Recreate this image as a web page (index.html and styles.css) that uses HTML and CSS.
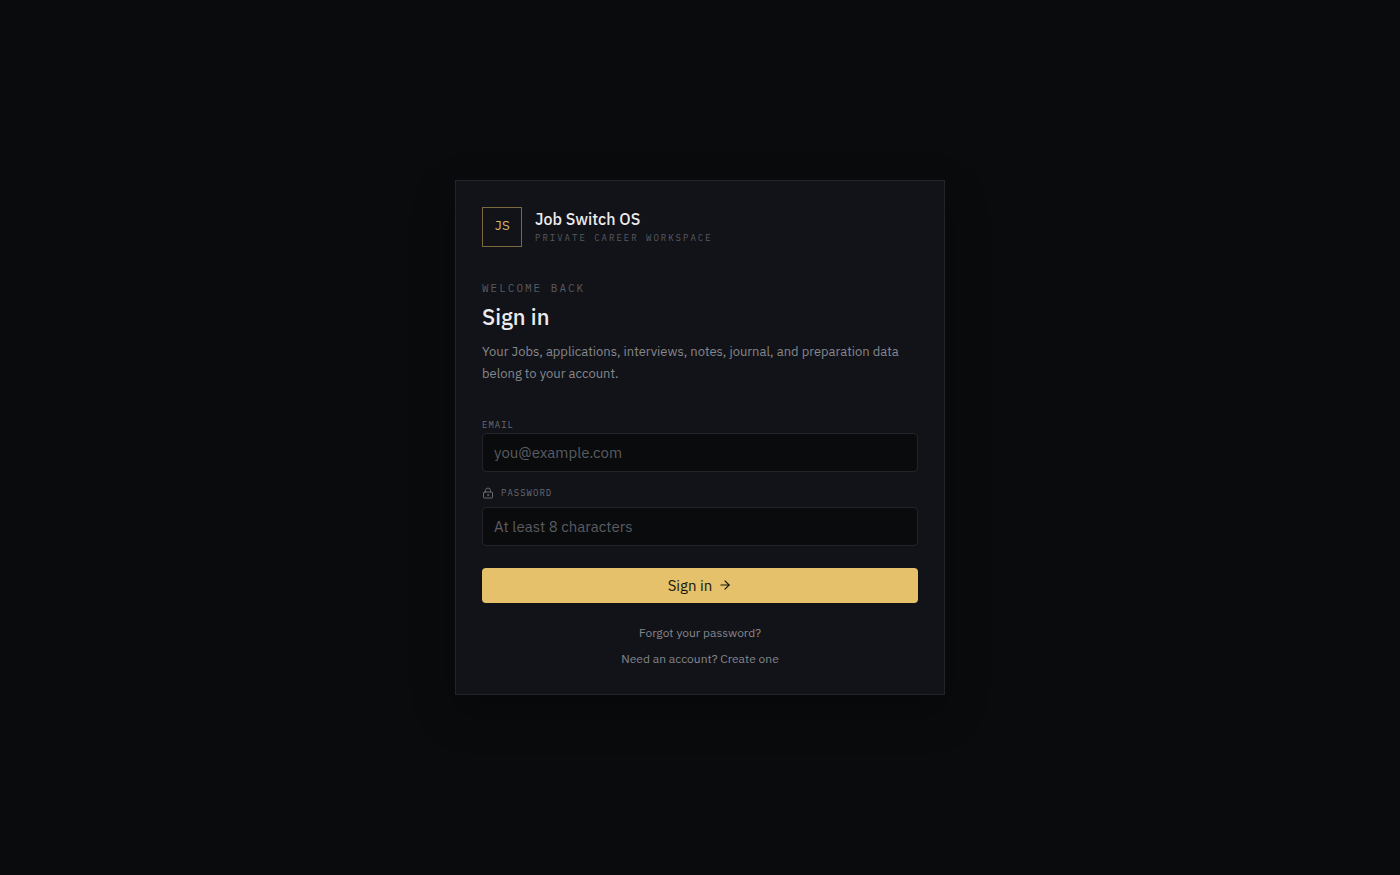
FILE: index.html
```html
<!DOCTYPE html>
<html lang="en">
<head>
<meta charset="utf-8">
<meta name="viewport" content="width=device-width, initial-scale=1">
<title>Sign in · Job Switch OS</title>
<link rel="stylesheet" href="styles.css">
</head>
<body class="page">
<main class="card">
  <header class="brand">
    <div class="brand-mark">JS</div>
    <div class="brand-text">
      <div class="brand-name">Job Switch OS</div>
      <div class="brand-tag">PRIVATE CAREER WORKSPACE</div>
    </div>
  </header>
  <section class="intro">
    <div class="eyebrow">WELCOME BACK</div>
    <h1 class="title">Sign in</h1>
    <p class="lead">Your Jobs, applications, interviews, notes, journal, and preparation data belong to your account.</p>
  </section>
  <form class="form">
    <div class="field">
      <label class="label" for="email">EMAIL</label>
      <input class="input" id="email" type="email" placeholder="you@example.com">
    </div>
    <div class="field field-password">
      <label class="label" for="password">
        <svg class="icon" width="12" height="12" viewBox="0 0 24 24" fill="none" stroke="currentColor" stroke-width="2" stroke-linecap="round" stroke-linejoin="round" aria-hidden="true"><circle cx="12" cy="16" r="1"/><rect x="3" y="10" width="18" height="12" rx="2"/><path d="M7 10V7a5 5 0 0 1 10 0v3"/></svg>
        <span>PASSWORD</span>
      </label>
      <input class="input" id="password" type="password" placeholder="At least 8 characters">
    </div>
    <button class="submit" type="button">Sign in
      <svg width="14" height="14" viewBox="0 0 24 24" fill="none" stroke="currentColor" stroke-width="2" stroke-linecap="round" stroke-linejoin="round" aria-hidden="true"><path d="M5 12h14"/><path d="m12 5 7 7-7 7"/></svg>
    </button>
  </form>
  <nav class="links">
    <a class="link" href="#">Forgot your password?</a>
    <a class="link" href="#">Need an account? Create one</a>
  </nav>
</main>
</body>
</html>
```
FILE: styles.css
```css
* { box-sizing: border-box; }

.page {
  margin: 0;
  min-height: 100vh;
  display: grid;
  place-items: center;
  background: #0a0b0d;
  color: #ececee;
  font-family: "IBM Plex Sans", Roboto, sans-serif;
}

.card {
  width: 100%;
  max-width: 490px;
  padding: 26px;
  background: #121318;
  border: 1px solid #22242a;
  box-shadow: 0 16px 40px rgba(0, 0, 0, 0.3);
}

.brand {
  display: flex;
  align-items: center;
  gap: 13px;
}

.brand-mark {
  display: grid;
  place-items: center;
  width: 40px;
  height: 40px;
  padding-bottom: 2px;
  border: 1px solid #7a6a3e;
  color: #d8b866;
  font: 13px/16px "IBM Plex Mono", "DejaVu Sans Mono", monospace;
}

.brand-name {
  font-size: 16px;
  line-height: 22px;
  font-weight: 500;
}

.brand-tag,
.eyebrow,
.label {
  font-family: "IBM Plex Mono", "DejaVu Sans Mono", monospace;
  color: #585a62;
}

.brand-tag {
  font-size: 9px;
  line-height: 16px;
  letter-spacing: 2px;
}

.intro { margin-top: 32px; }

.eyebrow {
  font-size: 11px;
  line-height: 18px;
  letter-spacing: 2px;
}

.title {
  margin: 4px 0 8px;
  font-size: 22px;
  line-height: 32px;
  font-weight: 500;
}

.lead {
  margin: 0;
  font-size: 13px;
  line-height: 22px;
  color: #85878d;
}

.form {
  display: flex;
  flex-direction: column;
  margin-top: 32px;
}

.field {
  display: flex;
  flex-direction: column;
}

.field-password {
  gap: 6px;
  margin-top: 13px;
}

.label {
  display: flex;
  align-items: center;
  gap: 7px;
  font-size: 9px;
  line-height: 16px;
  letter-spacing: 1px;
  color: #686a71;
}

.input {
  width: 100%;
  height: 39px;
  padding: 0 11px;
  background: #0a0b0d;
  border: 1px solid #22242a;
  border-radius: 4px;
  color: #ececee;
  font: inherit;
  font-size: 15px;
}

.input::placeholder {
  color: #5a5c62;
  opacity: 1;
}

.submit {
  display: flex;
  align-items: center;
  justify-content: center;
  gap: 6px;
  height: 35px;
  margin-top: 22px;
  padding: 0 6px 1px;
  background: #e4c16a;
  border: 0;
  border-radius: 4px;
  color: #1a1508;
  font: inherit;
  font-size: 15px;
}

.links {
  display: flex;
  flex-direction: column;
  align-items: center;
  gap: 8px;
  margin-top: 21px;
}

.link {
  color: #85878d;
  font-size: 12px;
  line-height: 18px;
  text-decoration: none;
}
```
